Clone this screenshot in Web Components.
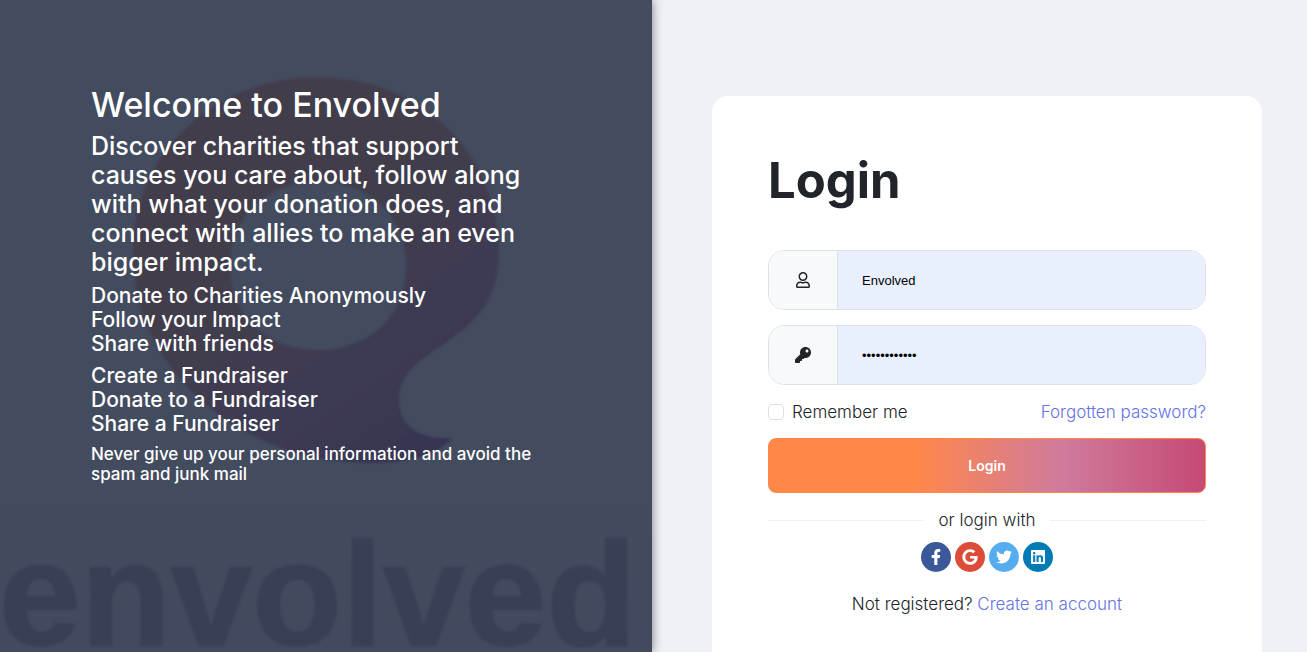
<!DOCTYPE html>
<html lang="en">
<head>
<meta charset="utf-8">
<meta name="viewport" content="width=device-width, initial-scale=1">
<title>Envolved - Login</title>
<style>
  body { margin: 0; background: #f0f1f6; color: #212529; font: 300 17px/24px Inter, "Open Sans", sans-serif; }
</style>
</head>
<body>
<envolved-page>
  <welcome-panel slot="intro"></welcome-panel>
  <login-card slot="form"></login-card>
</envolved-page>

<script>
const define = (name, html, setup) => {
  const template = document.createElement('template');
  template.innerHTML = html;
  customElements.define(name, class extends HTMLElement {
    constructor() {
      super();
      this.attachShadow({ mode: 'open' }).append(template.content.cloneNode(true));
    }
    connectedCallback() { if (setup) setup(this, this.shadowRoot); }
  });
};

define('envolved-page', `
  <style>
    :host { display: grid; grid-template-columns: 652fr 655fr; height: 100vh; }
    .intro { position: relative; z-index: 1; min-width: 0; }
    .form { min-width: 0; overflow-y: auto; scrollbar-width: none; padding: 96px 45px 0 60px; }
  </style>
  <div class="intro"><slot name="intro"></slot></div>
  <main class="form"><slot name="form"></slot></main>
`);

define('envolved-artwork', `
  <style>
    :host { display: block; pointer-events: none; }
    svg { display: block; width: 100%; height: 100%; }
    text { font: 700 147px "Liberation Sans", Arial, sans-serif; }
  </style>
  <svg viewBox="0 0 652 652" preserveAspectRatio="xMidYMax slice" aria-hidden="true">
    <defs>
      <linearGradient id="tint" gradientUnits="userSpaceOnUse" x1="270" y1="190" x2="450" y2="450">
        <stop offset="0" stop-color="#433d4b"/>
        <stop offset=".3" stop-color="#413c4e"/>
        <stop offset=".6" stop-color="#3e3b53"/>
        <stop offset="1" stop-color="#363553"/>
      </linearGradient>
      <filter id="soft"><feGaussianBlur stdDeviation="1.2"/></filter>
    </defs>
    <g filter="url(#soft)">
      <path fill="url(#tint)" fill-rule="evenodd" d="M318 77C418 77 499 152 499 252C499 302 474 325 432 352C408 368 399 382 399 399C399 424 416 440 452 438C438 455 408 464 364 463C300 460 246 442 192 392C152 350 133 305 133 252C133 152 216 77 318 77ZM318 182C268 182 230 214 230 266C230 317 268 350 318 350C368 350 406 317 406 266C406 214 368 182 318 182Z"/>
      <text x="-1" y="645" fill="#394156" stroke="#394156" stroke-width="2">envolved</text>
    </g>
  </svg>
`);

define('welcome-panel', `
  <style>
    :host { display: block; position: relative; height: 100%; box-sizing: border-box; padding: 86px 91px 0; background: linear-gradient(#434b5e 75%, #434a5f); color: #fff; box-shadow: 0 0 10px rgba(0, 0, 0, .5); }
    envolved-artwork { position: absolute; inset: 0; }
    .copy { position: relative; }
    h1, h2, h3, p { margin: 0 0 8px; font-weight: 500; }
    h1 { font-size: 34px; line-height: 38px; }
    h2 { margin-bottom: 7px; font-size: 25px; line-height: 29px; }
    h3 { font-size: 21px; line-height: 24px; }
    p { font-size: 17px; line-height: 20px; }
  </style>
  <envolved-artwork></envolved-artwork>
  <div class="copy">
    <h1>Welcome to Envolved</h1>
    <h2>Discover charities that support<br>causes you care about, follow along<br>with what your donation does, and<br>connect with allies to make an even<br>bigger impact.</h2>
    <h3>Donate to Charities Anonymously<br>Follow your Impact<br>Share with friends</h3>
    <h3>Create a Fundraiser<br>Donate to a Fundraiser<br>Share a Fundraiser</h3>
    <p>Never give up your personal information and avoid the<br>spam and junk mail</p>
  </div>
`);

define('icon-field', `
  <style>
    :host { display: flex; box-sizing: border-box; height: 60px; border: 1px solid #dee2e6; border-radius: 16px; overflow: hidden; }
    label { flex: none; display: flex; align-items: center; justify-content: center; width: 68px; border-right: 1px solid #dee2e6; background: #f8f9fa; }
    input { flex: 1; min-width: 0; margin: 0; padding: 0 24px; border: 0; outline: 0; background: #e8f0fe; color: #000; font: 400 13px "Liberation Sans", Arial, sans-serif; }
  </style>
  <label for="field"><slot></slot></label>
  <input id="field">
`, (host, root) => {
  const input = root.getElementById('field');
  input.type = host.getAttribute('type');
  input.value = host.getAttribute('value');
  input.setAttribute('aria-label', host.getAttribute('label'));
});

define('social-link', `
  <style>
    :host { display: block; }
    a { display: flex; align-items: center; justify-content: center; width: 30px; height: 30px; border-radius: 50%; background: var(--brand); color: #fff; }
  </style>
  <a href="#"><slot></slot></a>
`, (host, root) => root.querySelector('a').setAttribute('aria-label', host.getAttribute('label')));

define('login-card', `
  <style>
    :host { display: block; padding: 56px; border-radius: 16px; background: #fff; }
    h1 { margin: 0 0 40px; font-size: 49px; line-height: 58px; font-weight: 700; }
    icon-field { margin-bottom: 15px; }
    svg { display: block; fill: currentColor; }
    a { color: #6571e6; text-decoration: none; }
    .options { display: flex; justify-content: space-between; align-items: center; margin-bottom: 14px; }
    .remember { display: flex; align-items: center; gap: 8px; }
    input { appearance: none; box-sizing: border-box; width: 16px; height: 16px; margin: 0; border: 1px solid #dee2e6; border-radius: 4px; background: #fff; }
    input:checked { background: #6571e6; }
    button { display: block; width: 100%; height: 55px; margin-bottom: 15px; border: 1px solid #ff8748; border-radius: 8px; background: linear-gradient(90deg, #ff8748 0%, #ff8748 33%, #d07b9d 67%, #c54a75 100%); color: #fff; font: 600 14px/20px Inter, "Open Sans", sans-serif; }
    .divider { display: flex; align-items: center; gap: 15px; margin-bottom: 10px; }
    .divider::before, .divider::after { content: ""; flex: 1; height: 1px; background: #f0f1f6; }
    .social { display: flex; justify-content: center; gap: 4px; margin-bottom: 20px; }
    .register { margin: 0; text-align: center; }
  </style>
  <form>
    <h1>Login</h1>
    <icon-field type="text" label="Username" value="Envolved">
      <svg width="14" height="16" viewBox="0 0 448 512"><path d="M313.6 304c-28.700 0-42.500 16-89.600 16-47.100 0-60.800-16-89.600-16C60.200 304 0 364.200 0 438.400V464c0 26.500 21.500 48 48 48h352c26.500 0 48-21.500 48-48v-25.600c0-74.200-60.200-134.400-134.400-134.400zM400 464H48v-25.600c0-47.600 38.800-86.400 86.400-86.400 14.600 0 38.300 16 89.600 16 51.700 0 74.900-16 89.600-16 47.600 0 86.400 38.800 86.400 86.400V464zM224 288c79.500 0 144-64.500 144-144S303.500 0 224 0 80 64.500 80 144s64.500 144 144 144zm0-240c52.900 0 96 43.100 96 96s-43.100 96-96 96-96-43.100-96-96 43.100-96 96-96z"/></svg>
    </icon-field>
    <icon-field type="password" label="Password" value="envolved1234">
      <svg width="16" height="16" viewBox="0 0 512 512"><path d="M512 176.001C512 273.203 433.202 352 336 352c-11.220 0-22.190-1.062-32.827-3.069l-24.012 27.014A23.999 23.999 0 0 1 261.223 384H224v40c0 13.255-10.745 24-24 24h-40v40c0 13.255-10.745 24-24 24H24c-13.255 0-24-10.745-24-24v-78.059c0-6.365 2.529-12.470 7.029-16.971l161.802-161.802C163.108 213.814 160 195.271 160 176 160 78.798 238.797.001 335.999 0 433.488-.001 512 78.511 512 176.001zM336 128c0 26.510 21.490 48 48 48s48-21.490 48-48-21.490-48-48-48-48 21.490-48 48z"/></svg>
    </icon-field>
    <div class="options">
      <label class="remember"><input type="checkbox"><span>Remember me</span></label>
      <a href="#">Forgotten password?</a>
    </div>
    <button type="button">Login</button>
    <div class="divider">or login with</div>
    <div class="social">
      <social-link label="Facebook" style="--brand: #3b5998"><svg width="10" height="16" viewBox="0 0 320 512"><path d="M279.140 288l14.220-92.660h-88.910v-60.130c0-25.350 12.420-50.060 52.240-50.060h40.420V6.260S260.430 0 225.360 0c-73.220 0-121.080 44.380-121.080 124.720v70.620H22.890V288h81.390v224h100.170V288z"/></svg></social-link>
      <social-link label="Google" style="--brand: #dd4b39"><svg width="16" height="16" viewBox="0 0 488 512"><path d="M488 261.800C488 403.300 391.100 504 248 504 110.800 504 0 393.200 0 256S110.800 8 248 8c66.800 0 123 24.500 166.300 64.900l-67.500 64.900C258.500 52.600 94.300 116.600 94.300 256c0 86.500 69.100 156.600 153.700 156.600 98.200 0 135-70.400 140.800-106.900H248v-85.300h236.100c2.300 12.700 3.900 24.900 3.900 41.400z"/></svg></social-link>
      <social-link label="Twitter" style="--brand: #55acee"><svg width="16" height="16" viewBox="0 0 512 512"><path d="M459.370 151.716c.325 4.548.325 9.097.325 13.645 0 138.720-105.583 298.558-298.558 298.558-59.452 0-114.680-17.219-161.137-47.106 8.447.974 16.568 1.299 25.340 1.299 49.055 0 94.213-16.568 130.274-44.832-46.132-.975-84.792-31.188-98.112-72.772 6.498.974 12.995 1.624 19.818 1.624 9.421 0 18.843-1.300 27.614-3.573-48.081-9.747-84.143-51.980-84.143-102.985v-1.299c13.969 7.797 30.214 12.670 47.431 13.319-28.264-18.843-46.781-51.005-46.781-87.391 0-19.492 5.197-37.360 14.294-52.954 51.655 63.675 129.300 105.258 216.365 109.807-1.624-7.797-2.599-15.918-2.599-24.040 0-57.828 46.782-104.934 104.934-104.934 30.213 0 57.502 12.670 76.670 33.137 23.715-4.548 46.456-13.320 66.599-25.340-7.798 24.366-24.366 44.833-46.132 57.827 21.117-2.273 41.584-8.122 60.426-16.243-14.292 20.791-32.161 39.308-52.628 54.253z"/></svg></social-link>
      <social-link label="LinkedIn" style="--brand: #007bb5"><svg width="14" height="16" viewBox="0 0 448 512"><path d="M416 32H31.900C14.300 32 0 46.500 0 64.300v383.400C0 465.500 14.300 480 31.900 480H416c17.600 0 32-14.500 32-32.300V64.300c0-17.800-14.400-32.300-32-32.300zM135.400 416H69V202.200h66.500V416zm-33.200-243c-21.300 0-38.500-17.300-38.500-38.500S80.900 96 102.200 96c21.200 0 38.500 17.300 38.500 38.500 0 21.300-17.200 38.500-38.500 38.500zm282.100 243h-66.400V312c0-24.800-.5-56.700-34.500-56.700-34.600 0-39.900 27-39.900 54.900V416h-66.400V202.200h63.700v29.200h.9c8.900-16.800 30.600-34.500 62.900-34.500 67.200 0 79.700 44.300 79.700 101.900V416z"/></svg></social-link>
    </div>
    <p class="register">Not registered? <a href="#">Create an account</a></p>
  </form>
`);
</script>
</body>
</html>
